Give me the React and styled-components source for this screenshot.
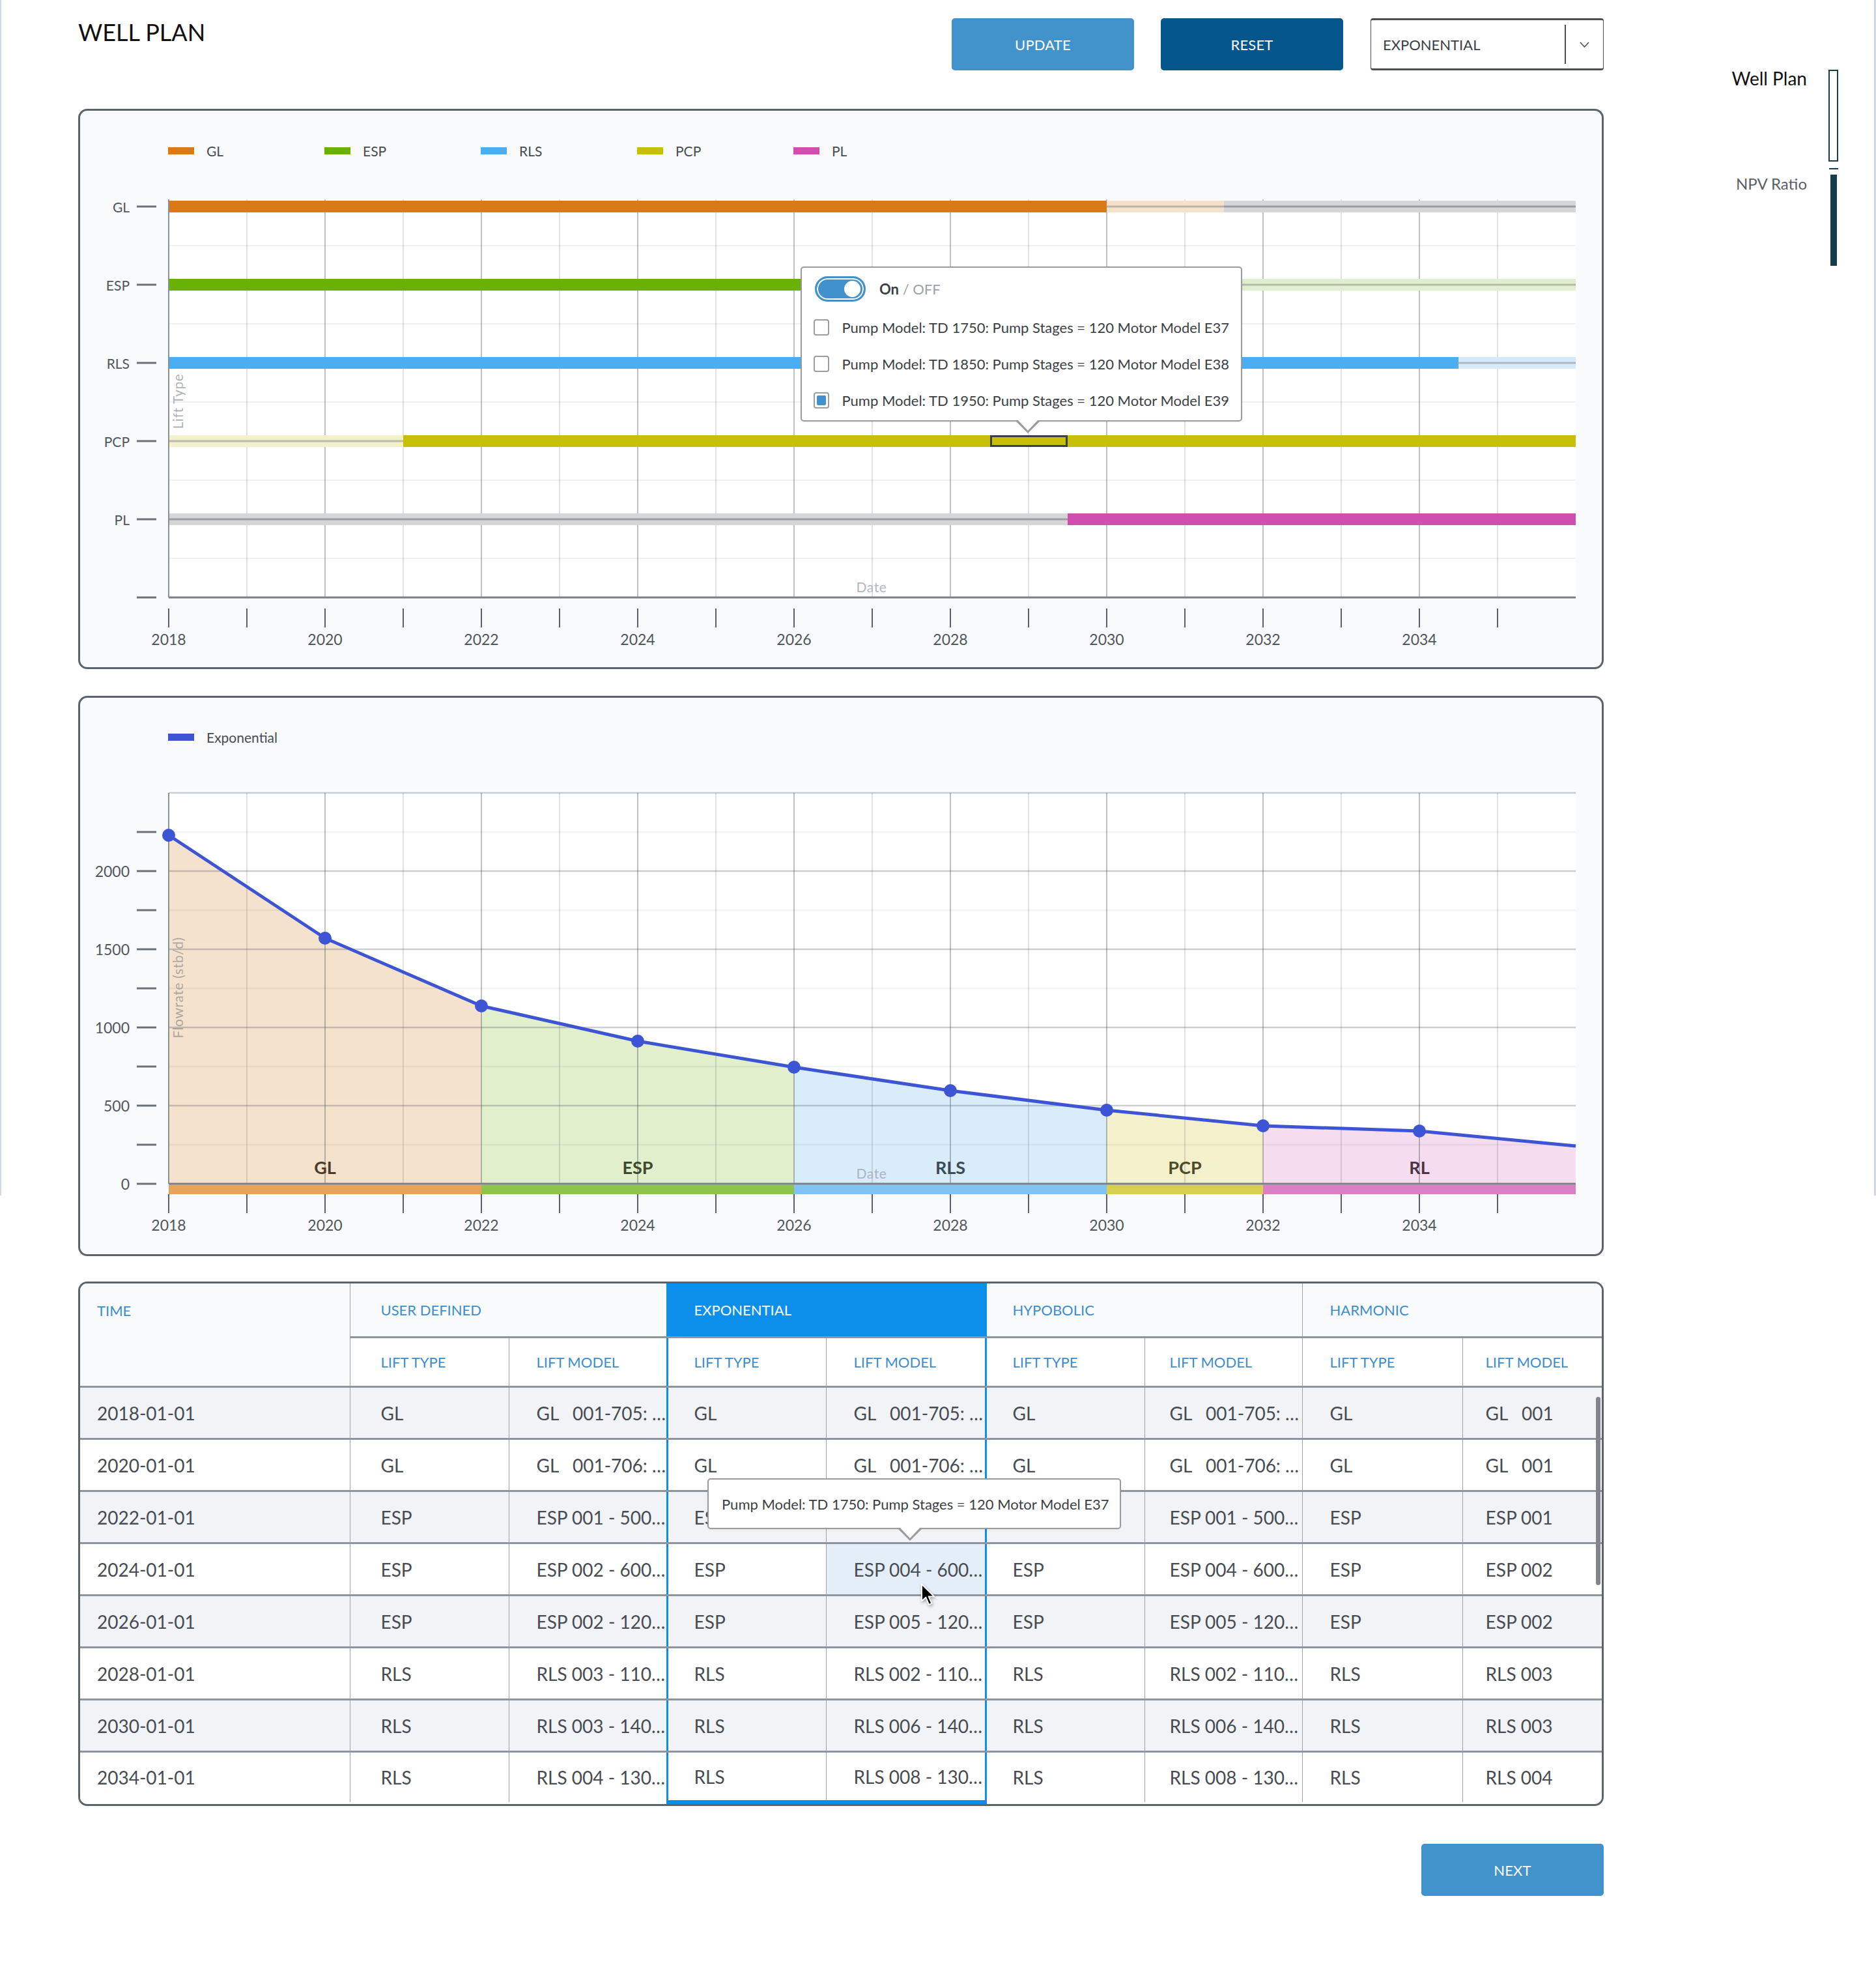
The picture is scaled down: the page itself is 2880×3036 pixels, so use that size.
import React from 'react';
import styled, { createGlobalStyle } from 'styled-components';

const GlobalStyle = createGlobalStyle`
  body {
    margin: 0;
    background: #ffffff;
    font-family: Lato, "Open Sans", sans-serif;
    color: #3a3f46;
  }
`;

const Frame = styled.div`
  box-sizing: border-box;
  position: relative;
  width: 2880px;
  min-height: 3036px;
  display: flex;
  padding-left: 120px;

  &::before,
  &::after {
    content: '';
    position: absolute;
    top: 0;
    height: 1835px;
    background: #d3d9e3;
  }
  &::before {
    left: 0;
    width: 2px;
  }
  &::after {
    right: 0;
    width: 3px;
  }
`;

const Main = styled.main`
  width: 2342px;
  flex: none;
`;

const Header = styled.header`
  display: flex;
  align-items: flex-start;
  padding-top: 28px;
  height: 80px;
`;

const Title = styled.h1`
  flex: 1;
  margin: 0;
  font-size: 36px;
  font-weight: 400;
  line-height: 1.2;
  color: #111;
`;

const Button = styled.button`
  width: 280px;
  height: 80px;
  margin-left: ${p => p.$gap || 0}px;
  border: none;
  border-radius: 5px;
  background: ${p => (p.$dark ? '#05568b' : '#4292cb')};
  color: #fff;
  font-family: inherit;
  font-size: 22px;
  letter-spacing: 0.2px;
  cursor: pointer;
`;

const Select = styled.div`
  box-sizing: border-box;
  width: 358px;
  height: 80px;
  margin-left: 42px;
  display: flex;
  align-items: center;
  border: 1.5px solid #4a4f55;
  border-top-width: 3px;
  border-bottom-width: 3px;
  border-radius: 4px;
  background: #fff;
`;

const SelectText = styled.span`
  flex: 1;
  padding-left: 18px;
  font-size: 22px;
  color: #3a3f46;
`;

const SelectDivider = styled.span`
  width: 2px;
  height: 60px;
  background: #4a4f55;
`;

const SelectArrow = styled.span`
  width: 57px;
  display: flex;
  justify-content: center;
  align-items: center;
`;

const Side = styled.aside`
  flex: 1;
  display: flex;
  flex-direction: column;
  align-items: flex-end;
  padding: 107px 58px 0 0;
`;

const NavItem = styled.div`
  display: flex;
  align-items: flex-start;
  gap: 33px;
`;

const NavLabel = styled.span`
  font-size: ${p => p.$size}px;
  line-height: 1.2;
  margin-top: ${p => p.$offset}px;
  color: ${p => (p.$active ? '#111' : '#5a6068')};
`;

const NavSlot = styled.div`
  width: 15px;
  display: flex;
  justify-content: center;
`;

const NavBar = styled.div`
  box-sizing: border-box;
  width: ${p => (p.$active ? 15 : 10)}px;
  height: ${p => (p.$active ? 141 : 140)}px;
  border: ${p => (p.$active ? '2px solid #163d4a' : 'none')};
  background: ${p => (p.$active ? '#fff' : '#163d4a')};
`;

const NavSeparator = styled.div`
  width: 14px;
  height: 2px;
  margin: 10px 0 8px;
  background: #163d4a;
`;

const Card = styled.section`
  box-sizing: border-box;
  position: relative;
  height: ${p => p.$height || 860}px;
  margin-top: ${p => p.$gap}px;
  border: 3px solid #5d636b;
  border-radius: 14px;
  background: #f9fafc;
  display: flex;
  flex-direction: column;
`;

const Legend = styled.div`
  flex: none;
  height: ${p => p.$height}px;
  display: flex;
  align-items: center;
  padding-left: 135px;
`;

const LegendItem = styled.div`
  width: 240px;
  display: flex;
  align-items: center;
  gap: 19px;
  font-size: 21px;
  color: #474c53;
`;

const Swatch = styled.span`
  width: 40px;
  height: 11px;
  background: ${p => p.$color};
`;

const ChartSvg = styled.svg`
  display: block;
  flex: none;
  font-family: Lato, "Open Sans", sans-serif;
`;

const AxisText = styled.text`
  font-size: ${p => p.$size || 23}px;
  fill: #50565d;
`;

const AxisTitle = styled.text`
  font-size: 21px;
  fill: ${p => p.$fill || 'rgba(120, 126, 134, 0.6)'};
  letter-spacing: 0.6px;
`;

const ZoneLabel = styled.text`
  font-size: 27px;
  font-weight: 700;
  fill: ${p => p.$fill};
`;

const Popover = styled.div`
  box-sizing: border-box;
  position: absolute;
  left: ${p => p.$left}px;
  top: ${p => p.$top}px;
  width: ${p => p.$width}px;
  height: ${p => p.$height}px;
  padding: ${p => p.$pad};
  background: #fff;
  border: 2px solid #9b9b9b;
  border-radius: 5px;
  box-shadow: 0 1px 3px rgba(0, 0, 0, 0.08);
  font-size: 22px;
  color: #3b3f45;
  white-space: nowrap;
  z-index: 2;

  &::before,
  &::after {
    content: '';
    position: absolute;
    top: 100%;
    border-style: solid;
    border-color: transparent;
    border-bottom-width: 0;
  }
  &::before {
    left: ${p => p.$arrow - 22}px;
    border-width: 20px 20px 0;
    border-top-color: #9b9b9b;
  }
  &::after {
    left: ${p => p.$arrow - 19}px;
    margin-top: -2px;
    border-width: 18px 17px 0;
    border-top-color: #fff;
  }
`;

const ToggleRow = styled.div`
  display: flex;
  align-items: center;
  gap: 21px;
  height: 39px;
  margin: 0 0 11px 2px;
`;

const Toggle = styled.span`
  box-sizing: border-box;
  position: relative;
  width: 78px;
  height: 39px;
  border-radius: 20px;
  border: 3px solid #4191cc;
  background: #4191cc;
  box-shadow: inset 0 0 0 2px #fff;
`;

const Knob = styled.span`
  position: absolute;
  right: 5px;
  top: 4px;
  width: 25px;
  height: 25px;
  border-radius: 50%;
  background: #fff;
`;

const OnText = styled.span`
  font-weight: 700;
  color: #3b3f45;
`;

const OffText = styled.span`
  color: #9ca1a7;
`;

const CheckRow = styled.div`
  display: flex;
  align-items: center;
  gap: 19px;
  height: 56px;
`;

const Checkbox = styled.span`
  box-sizing: border-box;
  width: 25px;
  height: 25px;
  padding: 3px;
  border: 2px solid #9a9da2;
  border-radius: 4px;
  background: #fff;

  &::after {
    content: '';
    display: ${p => (p.$checked ? 'block' : 'none')};
    width: 100%;
    height: 100%;
    border-radius: 2px;
    background: #4191cc;
  }
`;

const TooltipText = styled.div`
  height: 100%;
  display: flex;
  align-items: center;
`;

const TableCard = styled.section`
  box-sizing: border-box;
  position: relative;
  margin-top: 39px;
  border: 3px solid #5d636b;
  border-radius: 14px;
  overflow: hidden;
  background: #fff;
`;

const Table = styled.table`
  width: 100%;
  table-layout: fixed;
  border-collapse: collapse;
  font-family: inherit;
`;

const Th = styled.th`
  height: ${p => p.$h}px;
  padding: ${p => (p.$top ? `${p.$top}px` : 0)} 0 0 ${p => p.$pad}px;
  vertical-align: ${p => (p.$top ? 'top' : 'middle')};
  text-align: left;
  font-size: 22px;
  font-weight: 400;
  line-height: 26px;
  color: ${p => (p.$exp === 'head' ? '#fff' : '#3d8dcc')};
  background: ${p => (p.$exp === 'head' ? '#0b8fea' : p.$bg)};
  border-bottom: 3px solid #8f959e;
  border-left: ${p => (p.$exp === 'left' || p.$exp === 'head' ? '3px solid #0b8fea' : '1px solid #9ea3a9')};
  border-right: ${p => (p.$exp === 'right' || p.$exp === 'head' ? '3px solid #0b8fea' : '1px solid #9ea3a9')};
  white-space: nowrap;
`;

const Tr = styled.tr`
  background: ${p => (p.$odd ? '#f1f3f7' : '#ffffff')};
`;

const Td = styled.td`
  height: ${p => (p.$last ? 73 : 77)}px;
  padding: 0 0 0 ${p => p.$pad}px;
  font-size: 28px;
  color: #474c53;
  white-space: pre;
  overflow: hidden;
  background: ${p => (p.$hover ? '#e3eef8' : 'transparent')};
  border-bottom: ${p => (p.$last ? (p.$exp ? '6px solid #0b8fea' : 'none') : '3px solid #8f959e')};
  border-left: ${p => (p.$exp === 'left' ? '3px solid #0b8fea' : '1px solid #9ea3a9')};
  border-right: ${p => (p.$exp === 'right' ? '3px solid #0b8fea' : '1px solid #9ea3a9')};

  &:first-child {
    border-left: none;
  }
  &:last-child {
    border-right: none;
  }
`;

const Scrollbar = styled.span`
  position: absolute;
  left: 2327px;
  top: 174px;
  width: 7px;
  height: 289px;
  border-radius: 4px;
  background: #80858c;
`;

const Cursor = styled.svg`
  position: absolute;
  left: ${p => p.$left}px;
  top: ${p => p.$top}px;
  z-index: 3;
  filter: drop-shadow(1px 2px 2px rgba(0, 0, 0, 0.35));
`;

const Footer = styled.div`
  display: flex;
  justify-content: flex-end;
  margin-top: 58px;
`;

/* ---------- chart geometry (page pixel coordinates) ---------- */

const X0 = 259;
const xOf = yr => X0 + (yr - 2018) * 120;
const RIGHT = xOf(2036);
const YEARS = Array.from({ length: 18 }, (_, i) => 2018 + i);

const gridStroke = yr => (yr % 2 === 0 ? 'rgba(58, 64, 74, 0.42)' : 'rgba(58, 64, 74, 0.2)');

function VerticalGrid({ top, bottom }) {
  return YEARS.slice(1).map(yr => (
    <line key={yr} x1={xOf(yr)} x2={xOf(yr)} y1={top} y2={bottom} stroke={gridStroke(yr)} strokeWidth="1.6" />
  ));
}

function XAxis({ y, tickTop }) {
  return (
    <g>
      <line x1={X0} x2={RIGHT} y1={y} y2={y} stroke="#7a7f87" strokeWidth="3" />
      {YEARS.map(yr => (
        <line key={yr} x1={xOf(yr)} x2={xOf(yr)} y1={tickTop} y2={tickTop + 29} stroke="#5a6067" strokeWidth="2" />
      ))}
      {YEARS.filter(yr => yr % 2 === 0).map(yr => (
        <AxisText key={yr} x={xOf(yr)} y={tickTop + 47} textAnchor="middle" dominantBaseline="central">
          {yr}
        </AxisText>
      ))}
    </g>
  );
}

function YTick({ y, label, size }) {
  return (
    <g>
      <line x1="210" x2="240" y1={y} y2={y} stroke="#6b7078" strokeWidth="3" />
      {label && (
        <AxisText x="199" y={y} textAnchor="end" dominantBaseline="central" $size={size}>
          {label}
        </AxisText>
      )}
    </g>
  );
}

const LIFTS = {
  GL: { color: '#d97a16', light: '#f5e2cc' },
  ESP: { color: '#6ab106', light: '#e1efd0' },
  RLS: { color: '#4caef2', light: '#d8eafa' },
  PCP: { color: '#c8bf08', light: '#f3f0cc' },
  PL: { color: '#d04fae', light: '#f5dcef' },
};

const LANES = [
  { name: 'GL', y: 317, segs: [[2018, 2030, 'on'], [2030, 2031.5, 'faded'], [2031.5, 2036, 'off']] },
  { name: 'ESP', y: 437, segs: [[2018, 2027, 'on'], [2027, 2036, 'faded']] },
  { name: 'RLS', y: 557, segs: [[2018, 2034.5, 'on'], [2034.5, 2036, 'faded']] },
  { name: 'PCP', y: 677, segs: [[2018, 2021, 'faded'], [2021, 2036, 'on']] },
  { name: 'PL', y: 797, segs: [[2018, 2029.5, 'off'], [2029.5, 2036, 'on']] },
];

function LaneBar({ lane }) {
  const lift = LIFTS[lane.name];
  return lane.segs.map(([a, b, state]) => {
    const x = xOf(a);
    const w = xOf(b) - x;
    if (state === 'on') {
      return <rect key={a} x={x} y={lane.y - 9} width={w} height="18" fill={lift.color} />;
    }
    const off = state === 'off';
    return (
      <g key={a}>
        <rect x={x} y={lane.y - 9} width={w} height="18" fill={off ? '#d5d6d8' : lift.light} />
        <line x1={x} x2={x + w} y1={lane.y} y2={lane.y} stroke={off ? '#9b9ea3' : 'rgba(120, 124, 120, 0.45)'} strokeWidth="3" />
      </g>
    );
  });
}

function LiftTypeChart() {
  const top = 306;
  const bottom = 917;
  return (
    <ChartSvg width="2336" height="732" viewBox="123 292 2336 732">
      <rect x={X0} y={top} width={RIGHT - X0} height={bottom - top} fill="#fff" />
      {LANES.map(l => (
        <line key={l.name} x1={X0} x2={RIGHT} y1={l.y + 60} y2={l.y + 60} stroke="#eff0f2" strokeWidth="2" />
      ))}
      <VerticalGrid top={top} bottom={bottom} />
      {LANES.map(l => (
        <LaneBar key={l.name} lane={l} />
      ))}
      <rect x="1521.5" y="669.5" width="116" height="15" fill="none" stroke="#3a3f48" strokeWidth="3" />
      <line x1={X0} x2={X0} y1={top} y2={bottom} stroke="#8b9097" strokeWidth="2" />
      {LANES.map(l => (
        <YTick key={l.name} y={l.y} label={l.name} size={21} />
      ))}
      <YTick y={bottom} />
      <XAxis y={bottom} tickTop={934} />
      <AxisTitle x="272" y="616" textAnchor="middle" dominantBaseline="central" transform="rotate(-90 272 616)">
        Lift Type
      </AxisTitle>
      <AxisTitle x="1338" y="900" textAnchor="middle" dominantBaseline="central" $fill="#b3b7bc">
        Date
      </AxisTitle>
    </ChartSvg>
  );
}

const Y0 = 1817;
const POINTS = [
  [2018, 1282], [2020, 1440], [2022, 1544], [2024, 1598], [2026, 1638],
  [2028, 1674], [2030, 1704], [2032, 1728], [2034, 1736],
];
const LINE = [...POINTS, [2036, 1759]];

const ZONES = [
  { name: 'GL', from: 2018, to: 2022, at: 2020, fill: '#f5e2cc', strip: '#e9a25a', text: '#4a3b2b' },
  { name: 'ESP', from: 2022, to: 2026, at: 2024, fill: '#e1efcc', strip: '#8dc54b', text: '#3c4a2e' },
  { name: 'RLS', from: 2026, to: 2030, at: 2028, fill: '#d9ecfa', strip: '#80c3f5', text: '#3b4a57' },
  { name: 'PCP', from: 2030, to: 2032, at: 2031, fill: '#f3f0cc', strip: '#d9cf4f', text: '#4c4b27' },
  { name: 'RL', from: 2032, to: 2036, at: 2034, fill: '#f5dcef', strip: '#dd7fc4', text: '#4b3447' },
];

function zonePolygon(z) {
  const pts = LINE.filter(([yr]) => yr >= z.from && yr <= z.to).map(([yr, py]) => `${xOf(yr)},${py}`);
  return [`${xOf(z.from)},${Y0}`, ...pts, `${xOf(z.to)},${Y0}`].join(' ');
}

function FlowrateChart() {
  const top = 1217;
  const levels = Array.from({ length: 11 }, (_, i) => i * 250);
  return (
    <ChartSvg width="2336" height="734" viewBox="123 1191 2336 734">
      <rect x={X0} y={top} width={RIGHT - X0} height={Y0 - top} fill="#fff" />
      {ZONES.map(z => (
        <polygon key={z.name} points={zonePolygon(z)} fill={z.fill} />
      ))}
      {levels.slice(1).map(v => (
        <line
          key={v}
          x1={X0}
          x2={RIGHT}
          y1={Y0 - v * 0.24}
          y2={Y0 - v * 0.24}
          stroke={v % 500 === 0 ? 'rgba(58, 64, 74, 0.26)' : 'rgba(58, 64, 74, 0.07)'}
          strokeWidth="2.5"
        />
      ))}
      <VerticalGrid top={top} bottom={Y0} />
      {ZONES.map(z => (
        <rect key={z.name} x={xOf(z.from)} y={1818.5} width={xOf(z.to) - xOf(z.from)} height="14.5" fill={z.strip} />
      ))}
      <line x1={X0} x2={X0} y1={top} y2={Y0} stroke="#8b9097" strokeWidth="2" />
      {levels.slice(0, 10).map(v => (
        <YTick key={v} y={Y0 - v * 0.24} label={v % 500 === 0 ? String(v) : null} />
      ))}
      <XAxis y={Y0} tickTop={1833} />
      <polyline
        points={LINE.map(([yr, py]) => `${xOf(yr)},${py}`).join(' ')}
        fill="none"
        stroke="#3d55d4"
        strokeWidth="5"
        strokeLinejoin="round"
      />
      {POINTS.map(([yr, py]) => (
        <circle key={yr} cx={xOf(yr)} cy={py} r="10" fill="#3d55d4" />
      ))}
      {ZONES.map(z => (
        <ZoneLabel key={z.name} x={xOf(z.at)} y="1791" textAnchor="middle" dominantBaseline="central" $fill={z.text}>
          {z.name}
        </ZoneLabel>
      ))}
      <AxisTitle x="272" y="1516" textAnchor="middle" dominantBaseline="central" transform="rotate(-90 272 1516)">
        Flowrate (stb/d)
      </AxisTitle>
      <AxisTitle x="1338" y="1800" textAnchor="middle" dominantBaseline="central" $fill="#a9b4bf">
        Date
      </AxisTitle>
    </ChartSvg>
  );
}

/* ---------- table ---------- */

const PADS = [26, 47, 42, 40, 42, 40, 38, 42, 35];
const WIDTHS = [414, 244, 243, 244, 245, 244, 242, 246];
const EXP_SIDE = { 3: 'left', 4: 'right' };

// cells hidden under the hover tooltip are left empty
const ROWS = [
  ['2018-01-01', 'GL', 'GL   001-705: …', 'GL', 'GL   001-705: …', 'GL', 'GL   001-705: …', 'GL', 'GL   001'],
  ['2020-01-01', 'GL', 'GL   001-706: …', 'GL', 'GL   001-706: …', 'GL', 'GL   001-706: …', 'GL', 'GL   001'],
  ['2022-01-01', 'ESP', 'ESP 001 - 500…', 'ESP', '', '', 'ESP 001 - 500…', 'ESP', 'ESP 001'],
  ['2024-01-01', 'ESP', 'ESP 002 - 600…', 'ESP', 'ESP 004 - 600…', 'ESP', 'ESP 004 - 600…', 'ESP', 'ESP 002'],
  ['2026-01-01', 'ESP', 'ESP 002 - 120…', 'ESP', 'ESP 005 - 120…', 'ESP', 'ESP 005 - 120…', 'ESP', 'ESP 002'],
  ['2028-01-01', 'RLS', 'RLS 003 - 110…', 'RLS', 'RLS 002 - 110…', 'RLS', 'RLS 002 - 110…', 'RLS', 'RLS 003'],
  ['2030-01-01', 'RLS', 'RLS 003 - 140…', 'RLS', 'RLS 006 - 140…', 'RLS', 'RLS 006 - 140…', 'RLS', 'RLS 003'],
  ['2034-01-01', 'RLS', 'RLS 004 - 130…', 'RLS', 'RLS 008 - 130…', 'RLS', 'RLS 008 - 130…', 'RLS', 'RLS 004'],
];

const GROUPS = [
  { label: 'USER DEFINED', col: 1 },
  { label: 'EXPONENTIAL', col: 3, exp: true },
  { label: 'HYPOBOLIC', col: 5 },
  { label: 'HARMONIC', col: 7 },
];

const PUMP = 'Pump Model: TD 1750: Pump Stages = 120 Motor Model E37';

function Chevron() {
  return (
    <svg width="15" height="9" viewBox="0 0 15 9">
      <path d="M1 1 L7.5 8 L14 1" fill="none" stroke="#4a4f55" strokeWidth="1.6" />
    </svg>
  );
}

function PlanTable() {
  return (
    <TableCard>
      <Table>
        <colgroup>
          {WIDTHS.map((w, i) => (
            <col key={i} style={{ width: w }} />
          ))}
          <col />
        </colgroup>
        <thead>
          <tr>
            <Th rowSpan={2} $pad={PADS[0]} $top={29} $bg="#f9fafc" style={{ borderLeft: 'none' }}>
              TIME
            </Th>
            {GROUPS.map(g => (
              <Th
                key={g.label}
                colSpan={2}
                $h={81}
                $pad={PADS[g.col]}
                $bg="#f9fafc"
                $exp={g.exp ? 'head' : undefined}
                style={g.col === 7 ? { borderRight: 'none' } : undefined}
              >
                {g.label}
              </Th>
            ))}
          </tr>
          <tr>
            {Array.from({ length: 8 }, (_, i) => (
              <Th key={i} $h={73} $pad={PADS[i + 1]} $bg="#ffffff" $exp={EXP_SIDE[i + 1]} style={i === 7 ? { borderRight: 'none' } : undefined}>
                {i % 2 === 0 ? 'LIFT TYPE' : 'LIFT MODEL'}
              </Th>
            ))}
          </tr>
        </thead>
        <tbody>
          {ROWS.map((row, r) => (
            <Tr key={row[0]} $odd={r % 2 === 0}>
              {row.map((cell, c) => (
                <Td
                  key={c}
                  $pad={PADS[c]}
                  $exp={EXP_SIDE[c]}
                  $last={r === ROWS.length - 1}
                  $hover={r === 3 && c === 4}
                >
                  {cell}
                </Td>
              ))}
            </Tr>
          ))}
        </tbody>
      </Table>
      <Scrollbar />
      <Popover $left={963} $top={299} $width={635} $height={78} $pad="0 0 0 20px" $arrow={311}>
        <TooltipText>{PUMP}</TooltipText>
      </Popover>
      <Cursor $left={1290} $top={460} width="24" height="36" viewBox="0 0 22 34">
        <path d="M1.5 1.5 L1.5 26 L7.5 20.5 L12 31 L16 29.3 L11.6 19.2 L19.5 19.2 Z" fill="#000" stroke="#fff" strokeWidth="1.8" strokeLinejoin="round" />
      </Cursor>
    </TableCard>
  );
}

export default function App() {
  return (
    <>
      <GlobalStyle />
      <Frame>
        <Main>
          <Header>
            <Title>WELL PLAN</Title>
            <Button>UPDATE</Button>
            <Button $dark $gap={41}>RESET</Button>
            <Select>
              <SelectText>EXPONENTIAL</SelectText>
              <SelectDivider />
              <SelectArrow>
                <Chevron />
              </SelectArrow>
            </Select>
          </Header>

          <Card $gap={59}>
            <Legend $height={122}>
              {Object.entries(LIFTS).map(([name, lift]) => (
                <LegendItem key={name}>
                  <Swatch $color={lift.color} />
                  {name}
                </LegendItem>
              ))}
            </Legend>
            <LiftTypeChart />
            <Popover $left={1106} $top={239} $width={678} $height={238} $pad="13px 18px 3px" $arrow={349}>
              <ToggleRow>
                <Toggle>
                  <Knob />
                </Toggle>
                <span>
                  <OnText>On</OnText> <OffText>/ OFF</OffText>
                </span>
              </ToggleRow>
              {['1750', '1850', '1950'].map((td, i) => (
                <CheckRow key={td}>
                  <Checkbox $checked={i === 2} />
                  {`Pump Model: TD ${td}: Pump Stages = 120 Motor Model E${37 + i}`}
                </CheckRow>
              ))}
            </Popover>
          </Card>

          <Card $gap={41}>
            <Legend $height={120}>
              <LegendItem>
                <Swatch $color="#3d55d4" />
                Exponential
              </LegendItem>
            </Legend>
            <FlowrateChart />
          </Card>

          <PlanTable />

          <Footer>
            <Button>NEXT</Button>
          </Footer>
        </Main>

        <Side>
          <NavItem>
            <NavLabel $active $size={28} $offset={-3}>Well Plan</NavLabel>
            <NavSlot>
              <NavBar $active />
            </NavSlot>
          </NavItem>
          <NavSeparator />
          <NavItem>
            <NavLabel $size={24} $offset={0}>NPV Ratio</NavLabel>
            <NavSlot>
              <NavBar />
            </NavSlot>
          </NavItem>
        </Side>
      </Frame>
    </>
  );
}
